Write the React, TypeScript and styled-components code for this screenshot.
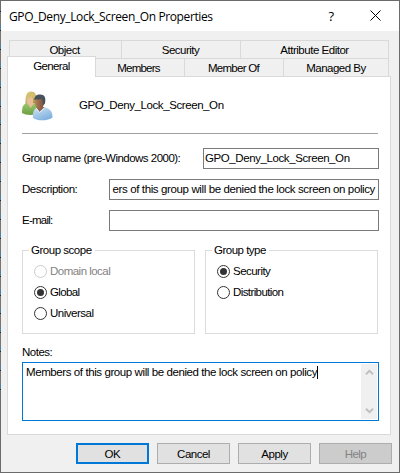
import { FC, ReactNode } from 'react';
import styled, { createGlobalStyle } from 'styled-components';

const App: FC = () => {
    return (
        <>
            <GlobalStyle />
            <Dialog>
                <TitleBar>
                    <Title>GPO_Deny_Lock_Screen_On Properties</Title>
                    <HelpMark>?</HelpMark>
                    <CloseIcon viewBox="0 0 11 11">
                        <path d="M.5.5l10 10M10.5.5l-10 10" />
                    </CloseIcon>
                </TitleBar>
                <BackTabs>
                    <BackTab $width={112} $shift={2}><Text $ls={-0.5}>Object</Text></BackTab>
                    <BackTab $width={119} $shift={1}><Text $ls={-0.53}>Security</Text></BackTab>
                    <BackTab $width={148}><Text $ls={-0.48}>Attribute Editor</Text></BackTab>
                </BackTabs>
                <FrontTabs>
                    <ActiveTab><Text $ls={-0.62}>General</Text></ActiveTab>
                    <FrontTab $width={89} $shift={3}><Text $ls={-0.8}>Members</Text></FrontTab>
                    <FrontTab $width={99} $shift={1}><Text $ls={-0.7}>Member Of</Text></FrontTab>
                    <FrontTab $width={105}><Text $ls={-0.5}>Managed By</Text></FrontTab>
                </FrontTabs>
                <Panel>
                    <Heading>
                        <GroupIcon />
                        <Text $ls={-0.41}>GPO_Deny_Lock_Screen_On</Text>
                    </Heading>
                    <Field>
                        <Label $width={181}><Text $ls={-0.52}>Group name (pre-Windows 2000):</Text></Label>
                        <TextBox><Text $ls={-0.41}>GPO_Deny_Lock_Screen_On</Text></TextBox>
                    </Field>
                    <Field>
                        <Label $width={87}><Text $ls={-0.45}>Description:</Text></Label>
                        <TextBox $end><Text $ls={-0.38}>ers of this group will be denied the lock screen on policy</Text></TextBox>
                    </Field>
                    <Field>
                        <Label $width={87}><Text $ls={-0.75}>E-mail:</Text></Label>
                        <TextBox />
                    </Field>
                    <Groups>
                        <Group>
                            <Legend><Text $ls={-0.48}>Group scope</Text></Legend>
                            <Option disabled><Text $ls={-0.52}>Domain local</Text></Option>
                            <Option checked><Text $ls={-0.62}>Global</Text></Option>
                            <Option><Text $ls={-0.5}>Universal</Text></Option>
                        </Group>
                        <Group>
                            <Legend><Text $ls={-0.5}>Group type</Text></Legend>
                            <Option checked><Text $ls={-0.53}>Security</Text></Option>
                            <Option><Text $ls={-0.6}>Distribution</Text></Option>
                        </Group>
                    </Groups>
                    <NotesLabel><Text $ls={-0.5}>Notes:</Text></NotesLabel>
                    <Notes>
                        <NotesText>
                            <Text $ls={-0.41}>Members of this group will be denied the lock screen on policy</Text>
                            <Caret />
                        </NotesText>
                        <ScrollBar>
                            <Arrow viewBox="0 0 9 7"><path d="M1 5.3l3.5-3.5L8 5.3" /></Arrow>
                            <Arrow viewBox="0 0 9 7"><path d="M1 1.7l3.5 3.5L8 1.7" /></Arrow>
                        </ScrollBar>
                    </Notes>
                </Panel>
                <Buttons>
                    <Button $kind="primary"><Text $ls={-0.4}>OK</Text></Button>
                    <Button><Text $ls={-0.5}>Cancel</Text></Button>
                    <Button><Text $ls={-0.45}>Apply</Text></Button>
                    <Button $kind="disabled"><Text $ls={-0.6}>Help</Text></Button>
                </Buttons>
            </Dialog>
        </>
    );
};

interface OptionProps {
    checked?: boolean;
    disabled?: boolean;
    children: ReactNode;
}

const Option: FC<OptionProps> = ({ checked, disabled, children }) => (
    <OptionRow $disabled={disabled}>
        <Radio $disabled={disabled}>{checked && <Dot />}</Radio>
        {children}
    </OptionRow>
);

const GroupIcon: FC = () => (
    <PeopleSvg viewBox="0 0 32 30">
        <defs>
            <linearGradient id="hair" x1="0" y1="0" x2="1" y2="1">
                <stop offset="0" stopColor="#e3d488" />
                <stop offset="1" stopColor="#a08636" />
            </linearGradient>
            <linearGradient id="green" x1="0" y1="0" x2="0" y2="1">
                <stop offset="0" stopColor="#9cc86a" />
                <stop offset="1" stopColor="#6ba043" />
            </linearGradient>
            <linearGradient id="blue" x1="0" y1="0" x2="0.6" y2="1">
                <stop offset="0" stopColor="#cfe3f6" />
                <stop offset="1" stopColor="#7fb0de" />
            </linearGradient>
            <linearGradient id="skin" x1="0" y1="0" x2="1" y2="0">
                <stop offset="0" stopColor="#b5805c" />
                <stop offset="1" stopColor="#75503c" />
            </linearGradient>
        </defs>
        <path d="M3.5 13C3 4 5 .5 9 .5s6 3 6 12.500z" fill="url(#hair)" />
        <path d="M0 22c0-6 1-9 5-10l9 0c2 1 3 4 3 10-4 2.500-13 2.500-17 0z" fill="url(#green)" />
        <path d="M5.500 12l3 5 4-5z" fill="#e9bd98" />
        <ellipse cx="8" cy="9.500" rx="3.200" ry="5" fill="#e9bd98" />
        <path d="M4.500 7.500c0-4 1.500-6 4.500-6s5 2 5 6c-2 0-3.500-1-4-2.500-1 1.500-3 2.500-5.500 2.500z" fill="#d3bf6c" />
        <path d="M11 27c-.5-6 1-9 4-10.500h8c5 1.500 7.500 4 7.500 10-4 3.500-15 3.800-19.500.5z" fill="url(#blue)" />
        <path d="M14 16l3.500 5 5-5z" fill="#8d6046" />
        <ellipse cx="17.500" cy="12" rx="4.500" ry="6" fill="url(#skin)" />
        <path d="M12.500 9C12 5.500 14.500 3.500 18 3.500c4.500 0 6.500 3 4.800 9.500l-1.600 1c0-2.500-.5-5-1.700-6-2 .5-4.500.3-7 1z" fill="#47525c" />
        <path d="M14 17l3.500 4.500L22.500 17" fill="none" stroke="#e9f3fb" />
    </PeopleSvg>
);

const GlobalStyle = createGlobalStyle`
    body {
        margin: 0;
        background: #ffffff;
        font-family: 'Liberation Sans', Arial, sans-serif;
        font-size: 11.5px;
        line-height: 13px;
        color: #000000;
    }
    * {
        box-sizing: border-box;
    }
`;
const Dialog = styled.div`
    position: relative;
    width: 400px;
    height: 473px;
    border: 1px solid #6b6b6b;
    background: #f0f0f0;

    /* desktop showing through along the window edge */
    &::before {
        content: '';
        position: absolute;
        left: -1px;
        top: 10px;
        width: 1px;
        height: 380px;
        background: repeating-linear-gradient(#20262b 0 1px, #7b7471 1px 13px, #4f7f9c 14px 18.9px);
    }
`;
const Text = styled.span<{ $ls?: number }>`
    letter-spacing: ${({ $ls = 0 }) => $ls}px;
    white-space: pre;
`;
const TitleBar = styled.div`
    display: flex;
    align-items: center;
    height: 30px;
    padding: 0 18px 0 8px;
    background: #ffffff;
`;
const Title = styled.div`
    flex: 1;
    font-family: 'Open Sans', 'Noto Sans', sans-serif;
    font-size: 12px;
    letter-spacing: -0.38px;
    white-space: nowrap;
`;
const HelpMark = styled.div`
    margin-right: 36px;
    font-family: 'Open Sans', 'Noto Sans', sans-serif;
    font-size: 13px;
`;
const CloseIcon = styled.svg`
    width: 11px;
    height: 11px;
    margin-top: -1px;
    fill: none;
    stroke: #000000;
`;
const BackTabs = styled.div`
    display: flex;
    width: 380px;
    height: 18px;
    margin: 9px 0 0 8px;
    border-left: 1px solid #d9d9d9;
`;
const BackTab = styled.div<{ $width: number; $shift?: number }>`
    display: flex;
    align-items: center;
    justify-content: center;
    width: ${({ $width }) => $width}px;
    padding: 2px ${({ $shift = 0 }) => $shift}px 0 0;
    border-top: 1px solid #d9d9d9;
    border-right: 1px solid #d9d9d9;
`;
const FrontTabs = styled.div`
    display: flex;
    align-items: flex-end;
    height: 21px;
    margin: -2px 0 0 6px;
`;
const ActiveTab = styled.div`
    position: relative;
    z-index: 1;
    display: flex;
    justify-content: center;
    width: 89px;
    height: 21px;
    padding-top: 3px;
    border: 1px solid #d9d9d9;
    border-bottom: none;
    background: #ffffff;
`;
const FrontTab = styled.div<{ $width: number; $shift?: number }>`
    display: flex;
    align-items: center;
    justify-content: center;
    width: ${({ $width }) => $width}px;
    height: 19px;
    padding: 1px ${({ $shift = 0 }) => $shift}px 0 0;
    border-top: 1px solid #d9d9d9;
    border-right: 1px solid #d9d9d9;
`;
const Panel = styled.div`
    width: 384px;
    height: 359px;
    margin: -1px 0 0 6px;
    padding: 14px 11px 0 14px;
    border: 1px solid #d9d9d9;
    background: #ffffff;
`;
const Heading = styled.div`
    display: flex;
    align-items: flex-start;
    gap: 25px;
    width: 356px;
    height: 43px;
    border-bottom: 1px solid #a0a0a0;

    span {
        margin-top: 8px;
    }
`;
const PeopleSvg = styled.svg`
    width: 32px;
    height: 30px;
`;
const Field = styled.div`
    display: flex;
    height: 21px;
    margin-bottom: 10px;

    ${Heading} + & {
        margin-top: 14px;
    }
`;
const Label = styled.div<{ $width: number }>`
    width: ${({ $width }) => $width}px;
    padding-top: 4px;
`;
const TextBox = styled.div<{ $end?: boolean }>`
    display: flex;
    flex: 1;
    justify-content: ${({ $end }) => ($end ? 'flex-end' : 'flex-start')};
    padding: 3px ${({ $end }) => ($end ? 3 : 2)}px 0 1px;
    border: 1px solid #7a7a7a;
    background: #ffffff;
    overflow: hidden;
`;
const Groups = styled.div`
    display: flex;
    gap: 10px;
    margin-top: 19px;
`;
const Group = styled.div`
    width: 173px;
    height: 84px;
    padding: 0 11px;
    border: 1px solid #dcdcdc;
`;
const Legend = styled.div`
    width: fit-content;
    height: 13px;
    margin: -7px 0 8px -5px;
    padding: 0 3px 0 2px;
    background: #ffffff;
`;
const OptionRow = styled.div<{ $disabled?: boolean }>`
    display: flex;
    align-items: center;
    gap: 3px;
    height: 13px;
    margin-bottom: 8px;
    color: ${({ $disabled }) => ($disabled ? '#838383' : '#000000')};
`;
const Radio = styled.span<{ $disabled?: boolean }>`
    display: flex;
    align-items: center;
    justify-content: center;
    width: 13px;
    height: 13px;
    border: 1px solid ${({ $disabled }) => ($disabled ? '#cccccc' : '#333333')};
    border-radius: 50%;
`;
const Dot = styled.span`
    width: 7px;
    height: 7px;
    border-radius: 50%;
    background: #333333;
`;
const NotesLabel = styled.div`
    height: 13px;
    margin: 12px 0 3px;
`;
const Notes = styled.div`
    display: flex;
    justify-content: space-between;
    height: 59px;
    padding: 1px;
    border: 1px solid #0078d7;
`;
const NotesText = styled.div`
    display: flex;
    padding: 2px 0 0 2px;
`;
const Caret = styled.span`
    width: 1px;
    height: 13px;
    background: #000000;
`;
const ScrollBar = styled.div`
    display: flex;
    flex-direction: column;
    justify-content: space-between;
    align-items: center;
    width: 16px;
    padding: 5px 0;
    background: #f0f0f0;
`;
const Arrow = styled.svg`
    width: 9px;
    height: 7px;
    fill: none;
    stroke: #bfbfbf;
    stroke-width: 2;
`;
const Buttons = styled.div`
    display: flex;
    gap: 8px;
    margin: 8px 0 0 75px;
`;
const Button = styled.div<{ $kind?: 'primary' | 'disabled' }>`
    display: flex;
    align-items: center;
    justify-content: center;
    width: 73px;
    height: 21px;
    padding-top: 1px;
    border: ${({ $kind }) => ($kind === 'primary' ? '2px solid #0078d7' : '1px solid #adadad')};
    background: ${({ $kind }) => ($kind === 'disabled' ? '#cccccc' : '#e1e1e1')};
    color: ${({ $kind }) => ($kind === 'disabled' ? '#838383' : '#000000')};
`;

export default App;
